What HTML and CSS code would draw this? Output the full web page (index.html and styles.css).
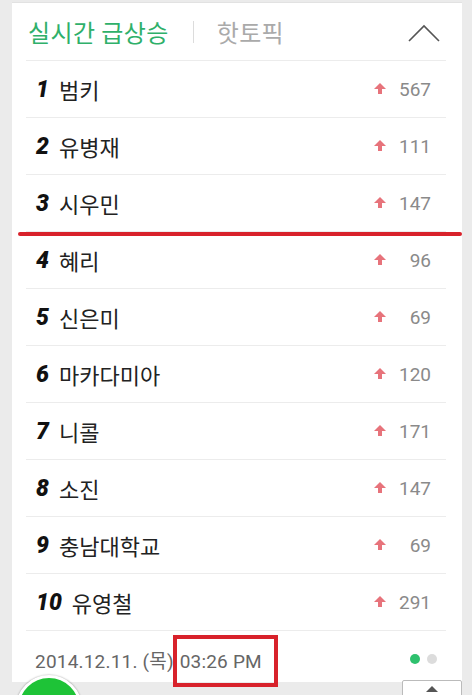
FILE: index.html
```html
<!DOCTYPE html>
<html>
<head>
    <title>실시간 급상승</title>
    <link rel="stylesheet" href="styles.css">
</head>
<body>
<div class="card">
    <div class="tabs">
        <span class="tab active">실시간 급상승</span>
        <span class="divider"></span>
        <span class="tab">핫토픽</span>
        <svg class="fold" width="32" height="18" viewBox="0 0 32 18">
            <polyline points="1,17 16,2 31,17" fill="none" stroke="#555" stroke-width="1.6"/>
        </svg>
    </div>
    <ul class="rank-list">
        <li><span class="num">1</span><span class="word">범키</span><span class="arrow"></span><span class="count">567</span></li>
        <li><span class="num">2</span><span class="word">유병재</span><span class="arrow"></span><span class="count">111</span></li>
        <li><span class="num">3</span><span class="word">시우민</span><span class="arrow"></span><span class="count">147</span></li>
        <li><span class="num">4</span><span class="word">혜리</span><span class="arrow"></span><span class="count">96</span></li>
        <li><span class="num">5</span><span class="word">신은미</span><span class="arrow"></span><span class="count">69</span></li>
        <li><span class="num">6</span><span class="word">마카다미아</span><span class="arrow"></span><span class="count">120</span></li>
        <li><span class="num">7</span><span class="word">니콜</span><span class="arrow"></span><span class="count">171</span></li>
        <li><span class="num">8</span><span class="word">소진</span><span class="arrow"></span><span class="count">147</span></li>
        <li><span class="num">9</span><span class="word">충남대학교</span><span class="arrow"></span><span class="count">69</span></li>
        <li><span class="num">10</span><span class="word">유영철</span><span class="arrow"></span><span class="count">291</span></li>
    </ul>
    <div class="footer">
        <span class="date">2014.12.11. (목) <span class="time">03:26 PM</span></span>
        <span class="dots"><i class="dot on"></i><i class="dot"></i></span>
    </div>
</div>
<div class="red-line"></div>
<div class="green-btn"></div>
<div class="top-btn"><span class="top-arrow"></span></div>
</body>
</html>
```

FILE: styles.css
```css
html, body {
    margin: 0;
    height: 695px;
    overflow: hidden;
}

body {
    background-color: #ebebeb;
    font-family: Roboto, "Noto Sans CJK KR", sans-serif;
    position: relative;
}

.card {
    margin: 2px 0 0 12px;
    width: 450px;
    background-color: white;
    border-top: 1px solid #e2e2e2;
    padding: 0 16px 0 14px;
    box-sizing: border-box;
    height: 680px;
}

.tabs {
    display: flex;
    align-items: center;
    height: 57px;
    border-bottom: 1px solid #ececec;
    padding-left: 2px;
}

.tab {
    font-family: "Noto Sans CJK KR", sans-serif;
    font-size: 24px;
    letter-spacing: 0.4px;
    color: #aaaaaa;
}

.tab.active {
    color: #2fb06a;
}

.divider {
    width: 1px;
    height: 22px;
    background-color: #dcdcdc;
    margin: 0 23px 0 24px;
}

.fold {
    margin-left: auto;
    margin-right: 6px;
    margin-top: 2px;
}

.rank-list {
    list-style: none;
    margin: 0;
    padding: 0;
}

.rank-list li {
    display: flex;
    align-items: center;
    height: 56px;
    border-bottom: 1px solid #ececec;
    padding: 0 15px 0 10px;
}

.num {
    font-family: Roboto, sans-serif;
    font-weight: 900;
    font-style: italic;
    font-size: 23px;
    color: #111;
    margin-right: 10px;
}

.word {
    font-family: "Noto Sans CJK KR", sans-serif;
    font-size: 22px;
    color: #222;
    flex: 1;
}

.arrow {
    width: 0;
    height: 0;
    border-left: 6px solid transparent;
    border-right: 6px solid transparent;
    border-bottom: 6px solid #e7737b;
    position: relative;
    margin-bottom: 6px;
}

.arrow::after {
    content: "";
    position: absolute;
    left: -2px;
    top: 6px;
    width: 4px;
    height: 5px;
    background-color: #e7737b;
}

.count {
    width: 45px;
    text-align: right;
    font-size: 19px;
    color: #8a8a8a;
}

.footer {
    display: flex;
    align-items: center;
    height: 56px;
    padding: 0 9px 0 9px;
}

.date {
    font-size: 19px;
    letter-spacing: 0.2px;
    color: #666;
    flex: 1;
}

.dots {
    display: flex;
    gap: 7px;
}

.dot {
    width: 10px;
    height: 10px;
    border-radius: 50%;
    background-color: #dcdcdc;
}

.dot.on {
    background-color: #2ec16e;
}

/* annotation overlays */
.red-line {
    position: absolute;
    left: 18px;
    top: 232px;
    width: 444px;
    height: 4px;
    border-radius: 2px;
    background-color: #d8222b;
}

.time {
    outline: 4px solid #d8222b;
    outline-offset: 0;
    padding: 11px 12px 10px 3px;
    margin-left: -2px;
}

.green-btn {
    position: absolute;
    left: 16px;
    top: 675px;
    width: 60px;
    height: 60px;
    border-radius: 50%;
    background-color: #1ec337;
    border: 3px solid white;
    box-shadow: 0 0 2px rgba(0, 0, 0, 0.4);
}

.top-btn {
    position: absolute;
    left: 402px;
    top: 680px;
    width: 58px;
    height: 40px;
    background-color: white;
    border: 1px solid #bbb;
    border-radius: 2px;
}

.top-arrow {
    position: absolute;
    left: 23px;
    top: 5px;
    border-left: 6px solid transparent;
    border-right: 6px solid transparent;
    border-bottom: 6px solid #555;
}
```
